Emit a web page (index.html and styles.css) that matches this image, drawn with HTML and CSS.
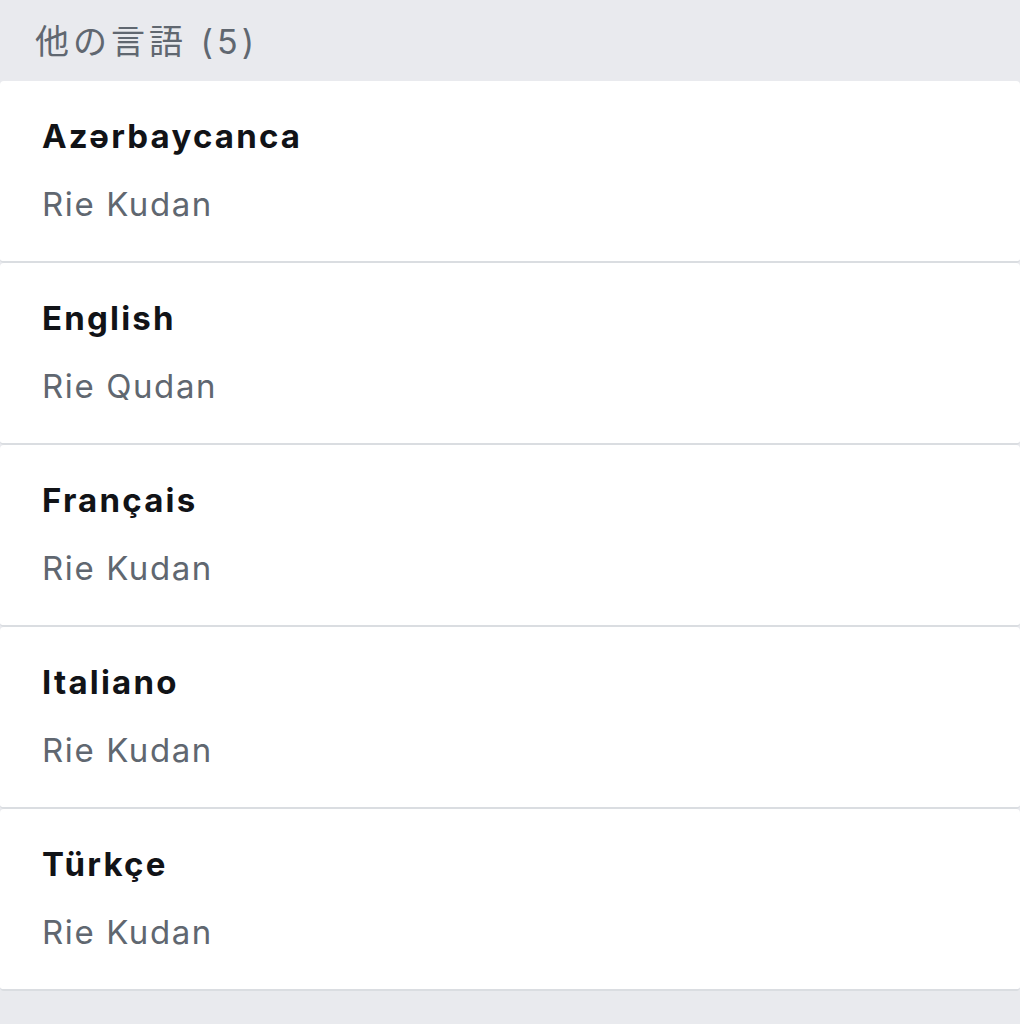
FILE: index.html
```html
<!DOCTYPE html>
<html lang="ja">
<head>
<meta charset="utf-8">
<link rel="stylesheet" href="styles.css">
</head>
<body>
<div class="page">
  <div class="header">他の言語 (5)</div>
  <div class="list">
    <div class="card"><div class="title">Azərbaycanca</div><div class="sub">Rie Kudan</div></div>
    <div class="card"><div class="title">English</div><div class="sub">Rie Qudan</div></div>
    <div class="card"><div class="title">Français</div><div class="sub">Rie Kudan</div></div>
    <div class="card"><div class="title">Italiano</div><div class="sub">Rie Kudan</div></div>
    <div class="card"><div class="title">Türkçe</div><div class="sub">Rie Kudan</div></div>
  </div>
</div>
</body>
</html>
```
FILE: styles.css
```css
html, body {
  margin: 0;
  padding: 0;
  background: #e9eaee;
}
.page {
  width: 1020px;
  height: 1024px;
  background: #e9eaee;
  font-family: Inter, "Noto Sans CJK JP", sans-serif;
}
.header {
  height: 81px;
  box-sizing: border-box;
  padding-left: 35px;
  padding-bottom: 2px;
  display: flex;
  align-items: center;
  font-family: Inter, "Noto Sans CJK JP", sans-serif;
  font-size: 34px;
  color: #606770;
  letter-spacing: 4px;
}
.card {
  height: 180px;
  background: #fff;
  border-bottom: 2px solid #dadde1;
  border-radius: 4px;
  padding-left: 42px;
  display: flex;
  flex-direction: column;
}
.title {
  margin-top: 35px;
  font-size: 33px;
  font-weight: 700;
  color: #111317;
  line-height: 40px;
  letter-spacing: 2.2px;
}
.sub {
  margin-top: 28px;
  font-size: 33px;
  color: #606770;
  line-height: 40px;
  letter-spacing: 1.6px;
}
```
